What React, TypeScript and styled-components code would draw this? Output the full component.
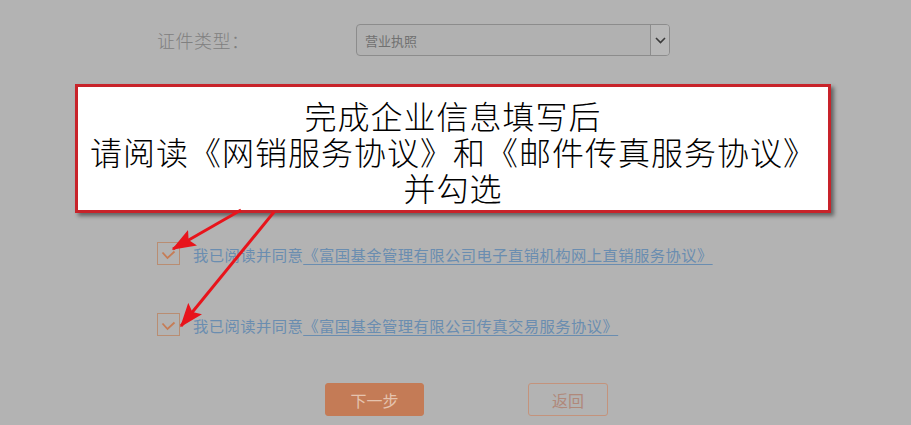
import styled, { createGlobalStyle } from "styled-components"

const GlobalStyle = createGlobalStyle`
    html, body {
        margin: 0;
        padding: 0;
        background: #b3b3b3;
    }
    body {
        font-family: "Noto Sans CJK SC", "Noto Sans", sans-serif;
    }
`

const Page = styled.div`
    position: relative;
    width: 911px;
    height: 425px;
    overflow: hidden;
    background: #b3b3b3;
`
const Form = styled.div`
    display: flex;
    flex-direction: column;
    padding: 24px 0 0 157px;
`
const FieldRow = styled.div`
    display: flex;
    align-items: center;
    height: 32px;
`
const Label = styled.label`
    width: 199px;
    font-size: 18px;
    font-weight: 300;
    color: #808080;
    letter-spacing: 0.5px;
`
const Select = styled.div`
    display: flex;
    width: 314px;
    height: 32px;
    box-sizing: border-box;
    border: 1px solid #8c8c8c;
    border-radius: 4px;
    background: #b1b1b1;
    overflow: hidden;
`
const SelectValue = styled.div`
    flex: 1;
    display: flex;
    align-items: center;
    padding-left: 8px;
    font-size: 13px;
    color: #707070;
`
const SelectArrow = styled.div`
    width: 18px;
    display: flex;
    align-items: center;
    justify-content: center;
    border-left: 1px solid #8c8c8c;
    background: #b8b8b8;
`
const AgreeRow = styled.div<{ $top: number }>`
    display: flex;
    align-items: center;
    gap: 13px;
    margin-top: ${(p) => p.$top}px;
    height: 23px;
`
const CheckBox = styled.div`
    width: 23px;
    height: 23px;
    box-sizing: border-box;
    border: 1px solid #b98d72;
    display: flex;
    align-items: center;
    justify-content: center;
    padding-top: 2px;
`
const AgreeText = styled.span`
    font-size: 15.3px;
    letter-spacing: 0.45px;
    color: #6a8db0;
    white-space: nowrap;
`
const AgreeLink = styled.a`
    color: #6a8db0;
    text-decoration: underline;
    text-underline-offset: 3px;
`
const Buttons = styled.div`
    display: flex;
    gap: 104px;
    margin: 47px 0 0 168px;
`
const Button = styled.div<{ $primary?: boolean; $w: number }>`
    width: ${(p) => p.$w}px;
    height: 33px;
    box-sizing: border-box;
    display: flex;
    align-items: center;
    justify-content: center;
    border-radius: 3px;
    font-size: 16px;
    background: ${(p) => (p.$primary ? "#c47b56" : "transparent")};
    color: ${(p) => (p.$primary ? "#e5c3ae" : "#b0887a")};
    border: 1px solid ${(p) => (p.$primary ? "#c47b56" : "#c4937c")};
`
const Callout = styled.div`
    position: absolute;
    left: 75px;
    top: 84px;
    width: 756px;
    height: 129px;
    box-sizing: border-box;
    padding-top: 4px;
    background: #ffffff;
    border: 3px solid #c8232a;
    box-shadow: 3px 3px 4px rgba(0, 0, 0, 0.45);
    display: flex;
    flex-direction: column;
    align-items: center;
    justify-content: center;
    font-size: 32px;
    line-height: 36px;
    letter-spacing: 1px;
    font-weight: 300;
    color: #000;
    text-align: center;
`
const ArrowLayer = styled.svg`
    position: absolute;
    left: 0;
    top: 0;
    pointer-events: none;
`

function Check() {
    return (
        <svg width="15" height="10" viewBox="0 0 15 10">
            <path d="M1.5 2.5 L6.5 8 L13.5 1.5" fill="none" stroke="#c67c55" strokeWidth="1.8" />
        </svg>
    )
}

export default function App() {
    return (
        <Page>
            <GlobalStyle />
            <Form>
                <FieldRow>
                    <Label>证件类型：</Label>
                    <Select>
                        <SelectValue>营业执照</SelectValue>
                        <SelectArrow>
                            <svg width="11" height="7" viewBox="0 0 11 7">
                                <path d="M1 1 L5.5 5.5 L10 1" fill="none" stroke="#3a3a3a" strokeWidth="1.6" />
                            </svg>
                        </SelectArrow>
                    </Select>
                </FieldRow>
                <AgreeRow $top={186}>
                    <CheckBox>
                        <Check />
                    </CheckBox>
                    <AgreeText>
                        我已阅读并同意<AgreeLink>《富国基金管理有限公司电子直销机构网上直销服务协议》</AgreeLink>
                    </AgreeText>
                </AgreeRow>
                <AgreeRow $top={48}>
                    <CheckBox>
                        <Check />
                    </CheckBox>
                    <AgreeText>
                        我已阅读并同意<AgreeLink>《富国基金管理有限公司传真交易服务协议》</AgreeLink>
                    </AgreeText>
                </AgreeRow>
                <Buttons>
                    <Button $primary $w={99}>下一步</Button>
                    <Button $w={80}>返回</Button>
                </Buttons>
            </Form>
            <Callout>
                <div>完成企业信息填写后</div>
                <div>请阅读《网销服务协议》和《邮件传真服务协议》</div>
                <div>并勾选</div>
            </Callout>
            <ArrowLayer width="911" height="425" viewBox="0 0 911 425">
                <defs>
                    <marker id="head" markerWidth="8" markerHeight="6" refX="7.5" refY="3" orient="auto" markerUnits="strokeWidth">
                        <path d="M0 0 L8 3 L0 6 L1.5 3 Z" fill="#e8141b" />
                    </marker>
                </defs>
                <line x1="241" y1="210" x2="173" y2="249" stroke="#e8141b" strokeWidth="3" markerEnd="url(#head)" />
                <line x1="274" y1="212" x2="181" y2="326" stroke="#e8141b" strokeWidth="3" markerEnd="url(#head)" />
            </ArrowLayer>
        </Page>
    )
}
